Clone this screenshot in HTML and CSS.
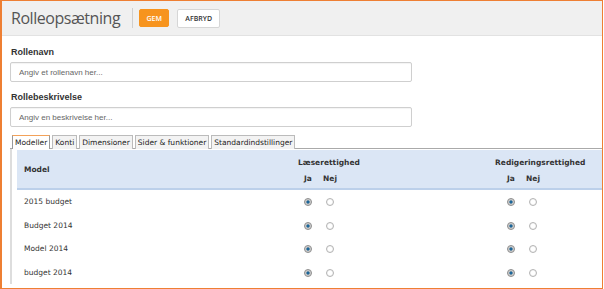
FILE: index.html
```html
<!DOCTYPE html>
<html lang="da">
<head>
    <meta charset="UTF-8">
    <title>Rolleopsætning</title>
    <link rel="stylesheet" href="styles.css">
</head>
<body>
    <div class="frame">
        <div class="topbar">
            <h1>Rolleopsætning</h1>
            <span class="divider"></span>
            <button class="btn btn-save">GEM</button>
            <button class="btn btn-cancel">AFBRYD</button>
        </div>

        <div class="content">
            <label class="field-label">Rollenavn</label>
            <input class="field" type="text" placeholder="Angiv et rollenavn her...">

            <label class="field-label">Rollebeskrivelse</label>
            <input class="field" type="text" placeholder="Angiv en beskrivelse her...">

            <div class="tabs">
                <ul class="tab-list">
                    <li class="tab active">Modeller</li>
                    <li class="tab">Konti</li>
                    <li class="tab">Dimensioner</li>
                    <li class="tab">Sider &amp; funktioner</li>
                    <li class="tab">Standardindstillinger</li>
                </ul>
                <div class="tab-panel">
                    <table class="rights">
                        <colgroup>
                            <col class="w-model">
                            <col class="w-radio">
                            <col class="w-radio">
                            <col class="w-gap">
                            <col class="w-radio">
                            <col class="w-radio">
                            <col class="w-end">
                        </colgroup>
                        <thead>
                            <tr>
                                <th class="col-model" rowspan="2">Model</th>
                                <th class="col-group" colspan="2">Læserettighed</th>
                                <th rowspan="2"></th>
                                <th class="col-group edit" colspan="2">Redigeringsrettighed</th>
                                <th rowspan="2"></th>
                            </tr>
                            <tr class="sub">
                                <th>Ja</th>
                                <th>Nej</th>
                                <th>Ja</th>
                                <th>Nej</th>
                            </tr>
                        </thead>
                        <tbody id="rows"></tbody>
                    </table>
                </div>
            </div>
        </div>
    </div>

    <script>
        const models = ['2015 budget', 'Budget 2014', 'Model 2014', 'budget 2014'];
        const tbody = document.getElementById('rows');
        models.forEach((name, i) => {
            const row = document.createElement('tr');
            row.innerHTML = `
                <td class="col-model">${name}</td>
                <td class="radio"><input type="radio" name="read${i}" checked></td>
                <td class="radio"><input type="radio" name="read${i}"></td>
                <td></td>
                <td class="radio"><input type="radio" name="edit${i}" checked></td>
                <td class="radio"><input type="radio" name="edit${i}"></td>
                <td></td>
            `;
            tbody.appendChild(row);
        });
    </script>
</body>
</html>
```

FILE: styles.css
```css
body {
    margin: 0;
    font-family: "DejaVu Sans", Verdana, sans-serif;
    background: #fff;
}
.frame {
    width: 603px;
    height: 289px;
    box-sizing: border-box;
    border: 1px solid #ee7f33;
    border-left-width: 2px;
    overflow: hidden;
}
.topbar {
    display: flex;
    align-items: center;
    height: 34px;
    background: #f0f0f0;
    border-bottom: 1px solid #e2e2e2;
    padding-left: 9px;
}
.topbar h1 {
    margin: 0;
    font-family: "Open Sans", sans-serif;
    font-weight: normal;
    font-size: 16px;
    color: #555;
    letter-spacing: -0.45px;
}
.divider {
    width: 1px;
    height: 20px;
    background: #cfcfcf;
    margin: 0 6px 0 12px;
}
.btn {
    font-family: "Open Sans", sans-serif;
    font-size: 7px;
    font-weight: 600;
    height: 19px;
    padding: 0;
    border-radius: 2px;
    margin-right: 8px;
    cursor: pointer;
}
.btn-save {
    background: #f7941e;
    border: 1px solid #f7941e;
    color: #fff;
    width: 30px;
    height: 18px;
}
.btn-cancel {
    background: #fff;
    border: 1px solid #d6d6d6;
    color: #333;
    width: 43px;
}
.content {
    display: flex;
    flex-direction: column;
    padding: 10px 0 0 8px;
}
.field-label {
    font-family: "Liberation Sans", Arial, sans-serif;
    font-size: 9px;
    font-weight: bold;
    color: #333;
    margin: 1px 0 5px 1px;
}
.field {
    width: 402px;
    height: 20px;
    box-sizing: border-box;
    border: 1px solid #cfcfcf;
    border-radius: 2px;
    padding: 0 8px;
    font-family: "Liberation Sans", Arial, sans-serif;
    font-size: 8px;
    margin-bottom: 9px;
    box-shadow: inset 0 1px 1px rgba(0, 0, 0, 0.05);
}
.field::placeholder {
    color: #666;
}
.tabs {
    margin-top: -1px;
}
.tab-list {
    display: flex;
    gap: 2px;
    list-style: none;
    margin: 0;
    padding: 0 0 0 2px;
    border-bottom: 1px solid #aaa;
}
.tab {
    font-size: 7.5px;
    color: #222;
    padding: 2px 2px 1px;
    background: #f3f3f3;
    border: 1px solid #bbb;
    border-bottom: none;
    line-height: 9px;
    margin-bottom: -1px;
}
.tab.active {
    background: #fff;
    border-color: #999;
    border-top: 1px solid #f3a25a;
    padding-bottom: 2px;
}
.tab-panel {
    border-left: 2px solid #ddd;
    padding: 1px 0 0 5px;
}
.rights {
    table-layout: fixed;
    width: 587px;
    border-collapse: collapse;
    font-size: 7.5px;
    color: #333;
}
.w-model { width: 280px; }
.w-radio { width: 22px; }
.w-gap { width: 159px; }
.w-end { width: 60px; }
.rights thead th {
    background: #dbe6f5;
    font-weight: bold;
    color: #333;
    padding: 0;
    white-space: nowrap;
}
.rights thead tr:first-child th {
    height: 21px;
}
.rights thead .sub th {
    height: 14px;
    vertical-align: top;
    text-align: center;
    padding-top: 1px;
}
.rights thead tr:first-child th[rowspan],
.rights thead .sub th {
    border-bottom: 2px solid #bcd0ea;
}
.rights .col-model {
    text-align: left;
    padding-left: 7px;
}
.rights .col-group {
    text-align: left;
    padding-left: 1px;
    padding-top: 2px;
}
.rights .col-group.edit {
    text-indent: -6px;
}
.rights td.radio {
    text-align: center;
}
.rights tbody td {
    height: 23.5px;
    padding: 0;
    white-space: nowrap;
}
.rights tbody td.col-model {
    padding-left: 7px;
}
.radio input {
    appearance: none;
    -webkit-appearance: none;
    width: 8px;
    height: 8px;
    margin: 0;
    border-radius: 50%;
    border: 1px solid #b4b4b4;
    background: radial-gradient(circle, #fff 0, #fff 40%, #e6e6e6 100%);
    vertical-align: middle;
    box-sizing: border-box;
}
.radio input:checked {
    border-color: #8f8f8f;
    background: radial-gradient(circle, #1b6fa8 0, #1b5f8e 30%, #c9c9c9 45%, #d8d8d8 100%);
}
```
